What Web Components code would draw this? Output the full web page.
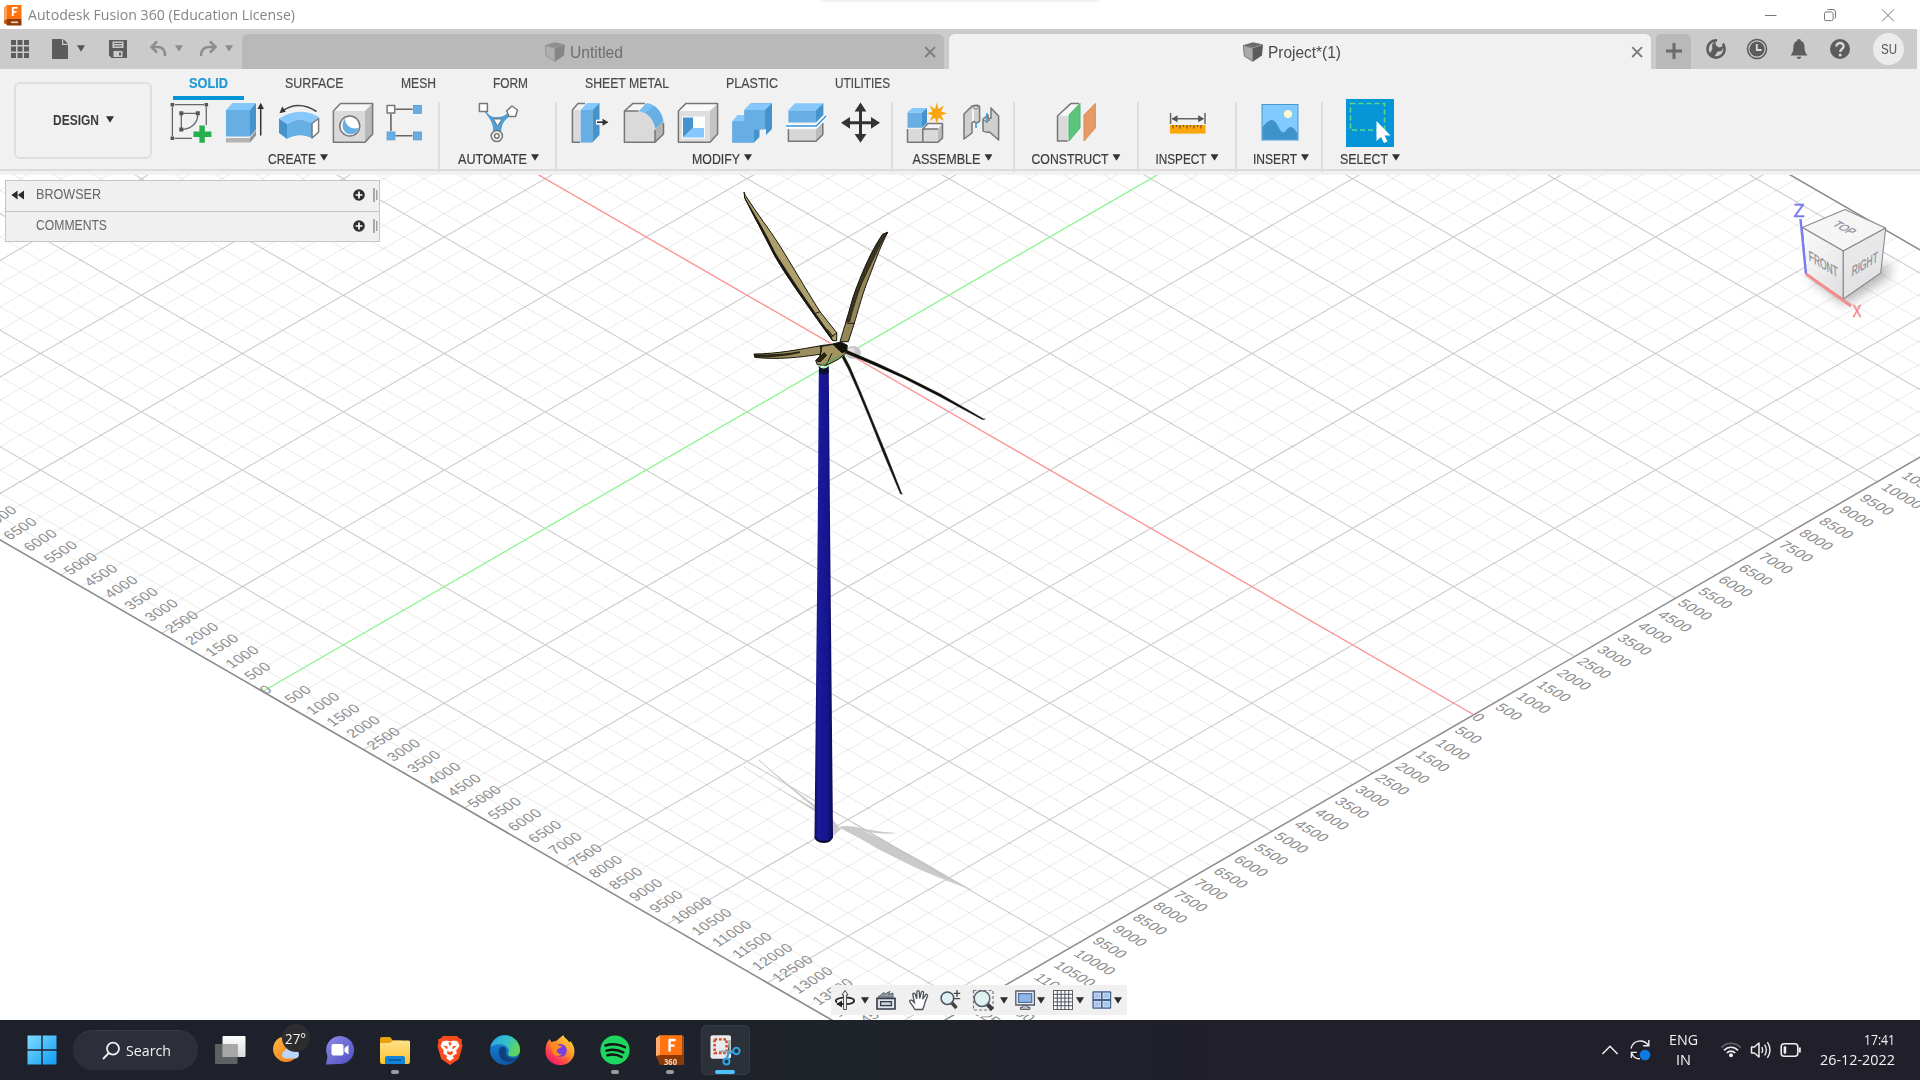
<!DOCTYPE html>
<html lang="en">
<head>
<meta charset="utf-8">
<title>Autodesk Fusion 360 (Education License)</title>
<style>
html,body{margin:0;padding:0;background:#fff;overflow:hidden}
body{width:1920px;height:1080px;font-family:"Liberation Sans",Arial,sans-serif}
</style>
</head>
<body>
<fusion-app></fusion-app>
<script>
const caret=(c='#333')=>`<svg class="caret" width="8" height="7" viewBox="0 0 8 7"><path d="M0 .3H8L4 6.8Z" fill="${c}"/></svg>`;

class Base extends HTMLElement{
  connectedCallback(){
    if(this.shadowRoot)return;
    const t=document.createElement('template');
    t.innerHTML=this.render();
    this.attachShadow({mode:'open'}).appendChild(t.content.cloneNode(true));
    if(this.ready)this.ready();
  }
}

/* Text squeezed or stretched horizontally to an exact width */
class FitText extends Base{
  render(){return `<style>:host{display:block;flex:none;white-space:nowrap;width:${this.getAttribute('w')}px}span{display:inline-block;transform-origin:0 50%;white-space:nowrap}</style><span><slot></slot></span>`}
  ready(){
    const s=this.shadowRoot.querySelector('span');
    const w=s.getBoundingClientRect().width;
    if(w)s.style.transform=`scaleX(${(+this.getAttribute('w')/w).toFixed(4)})`;
  }
}
customElements.define('fit-text',FitText);

const G='stroke="#777" stroke-width="1.5" stroke-linejoin="round"';
const B='#66aee4',BL='#86c8fb',BD='#4592cc';
const ICONS={
/* ---- ribbon, 44 x 44 ---- */
sketch:[44,44,`<g stroke="#666" stroke-width="1.3" fill="none"><path d="M3.4 6V35M6 3.7H35M37.3 6V24M6 37.3H23M12.3 14V27M14 12.3H27M28.7 14C28.7 22 22 28 14 28.3"/></g><g fill="#555"><path d="M1.6 1.9h3.6v3.6H1.6zM35.5 1.9h3.6v3.6h-3.6zM1.6 35.5h3.6v3.6H1.6zM10.3 10.3h4v4h-4zM26.8 10.3h4v4h-4zM10.3 26.5h4v4h-4z"/></g><path d="M30.4 24.6h5.4v6h6.6v5.4h-6.6v5.8h-5.4v-5.8h-6v-5.4h6z" fill="#25b04f"/>`],
extrude:[44,44,`<path d="M3 37H27L33 29V34L27 41.5H3Z" fill="#b5b5b5"/><path d="M27 37L33 30V34.5L27 41.5Z" fill="#949494"/><path d="M3 9H27V35.5H3Z" fill="${B}"/><path d="M3 9L9.5 2H33L27 9Z" fill="${BL}"/><path d="M27 9L33 2V28.5L27 35.5Z" fill="${BD}"/><path d="M37.7 6V34.5" stroke="#333" stroke-width="1.5"/><path d="M37.7 1.8L41 8H34.4Z" fill="#333"/>`],
revolve:[44,44,`<path d="M2 17.5L10 23V38L2 32Z" fill="${BD}"/><path d="M10 23Q22 15 35 22V37Q22 31 10 38Z" fill="${B}"/><path d="M2 17.5Q22 5 42 16L35 22.5Q22 15 10 23Z" fill="${BL}"/><path d="M35 22.5L41.6 17.5V31L35 37Z" fill="#fff" ${G}/><path d="M39.5 10.5Q22 -1 6 9.5" fill="none" stroke="#444" stroke-width="1.5"/><path d="M2.5 12.2L5.2 5.5L8.7 10.7Z" fill="#333"/>`],
hole:[44,44,`<path d="M2.4 10L9.5 2.4H41.6L34 10Z" fill="#f6f6f6"/><path d="M34 10L41.6 2.4V33L34 41.3Z" fill="#b9b9b9"/><path d="M2.4 10H34V41.3H2.4Z" fill="#dadada"/><path d="M2.4 10L9.5 2.4H41.6V33L34 41.3H2.4Z" fill="none" ${G}/><circle cx="18.8" cy="25" r="10" fill="#fff" ${G}/><path d="M14 17.5C10 22 11 31 17 33C22 34.5 27 31 27.5 27C20 29 14 24 14 17.5Z" fill="${B}"/>`],
pattern:[44,44,`<g transform="translate(-2.5 0)"><path d="M13 8.3H30M8.4 13V30M13 34.7H30" stroke="#666" stroke-width="1.6"/><rect x="4.6" y="4.5" width="7.6" height="7.6" fill="#fff" ${G}/><g fill="${B}" stroke="#5c9fd2" stroke-width="1"><rect x="31" y="4.5" width="7.8" height="7.8"/><rect x="4.6" y="31" width="7.8" height="7.8"/><rect x="31" y="31" width="7.8" height="7.8"/></g></g>`],
automate:[44,44,`<path d="M8 7C14 17 17 16 21 16C26 16 29 15 34 10L36 14C29 18 25 22 25 34H17C18 24 16 20 7 9Z" fill="#4f9fd8"/><path d="M17.5 18H26L21.5 25Z" fill="#fff" stroke="#777"/><rect x="3.4" y="2.4" width="8" height="8" fill="#fff" ${G}/><path d="M36 5L41.5 9L39.5 15.5H33L30.7 9.8Z" fill="#fff" ${G}/><circle cx="20.8" cy="35" r="5.6" fill="#eee" ${G}/><circle cx="20.8" cy="35" r="2.2" fill="#fff" ${G}/>`],
press:[44,44,`<path d="M4.4 9L10 2.4H17L12 9V41.3H4.4Z" fill="#f2f2f2"/><path d="M4.4 9H12V41.3H4.4Z" fill="#dadada"/><path d="M12 41.3H4.4V9L10 2.4H17" fill="none" ${G}/><path d="M12.6 9H24.4V41.6H12.6Z" fill="${B}"/><path d="M12.6 9L19 2H31.5L24.4 9Z" fill="${BL}"/><path d="M24.4 9L31.5 2V34L24.4 41.6Z" fill="${BD}"/><path d="M28 21.2H36" stroke="#fff" stroke-width="5"/><path d="M29 21.2H36" stroke="#333" stroke-width="1.7"/><path d="M34.5 17.7L40.5 21.2L34.5 24.7Z" fill="#333"/>`],
fillet:[44,44,`<path d="M2.4 10L11 2.4H24L17 10Z" fill="#f6f6f6"/><path d="M2.4 10H17C27 12 33 20 33 28V41.3H2.4Z" fill="#dadada"/><path d="M33 28L41.5 20V33L33 41.3Z" fill="#b5b5b5"/><path d="M17 10C27 12 31 18 33.5 27.8L41.5 20C40 10 33 3 24.5 2.2Z" fill="${B}"/><path d="M17 10L24.5 2.2C27 2.4 30 3.4 32 5L23 12Z" fill="${BL}" opacity=".6"/><path d="M16.5 10H2.4L11 2.4H23M2.4 10V41.3H33L41.5 33V22M33 41V29" fill="none" ${G}/>`],
shell:[44,44,`<path d="M2.4 10L10 2.4H41.6L34 10Z" fill="#fafafa"/><path d="M34 10L41.6 2.4V33L34 41.3Z" fill="#c4c4c4"/><path d="M2.4 10H34V41.3H2.4Z" fill="#dedede"/><path d="M2.4 10L10 2.4H41.6V33L34 41.3H2.4Z" fill="none" ${G}/><path d="M6 15.5H29V37.5H6Z" fill="#fff"/><path d="M7 16.5H17V27L7 36.5Z" fill="${BD}"/><path d="M7 36.5L17 27H28V36.5Z" fill="${BL}"/>`],
combine:[44,44,`<path d="M2.4 20.5L8 14H14.5V9L21 2.2H42V28L36 34V28H29.5V36L24 41.6H2.4Z" fill="${BD}"/><path d="M2.4 20.5H14.5V9H35V28.5H24V41.6H2.4Z" fill="${B}"/><path d="M2.4 20.5L8 14H14.5V20.5ZM14.5 9L21 2.2H42L35 9Z" fill="${BL}"/>`],
split:[44,44,`<path d="M4.4 9.3H32V21.5H4.4Z" fill="${B}"/><path d="M4.4 9.3L11 2.2H39.4L32 9.3Z" fill="${BL}"/><path d="M32 9.3L39.4 2.2V14L32 21.5Z" fill="${BD}"/><path d="M4.4 28.3H32V40.3H4.4Z" fill="#d6d6d6"/><path d="M32 28.3L38.8 21V33.5L32 40.3Z" fill="#bbb"/><path d="M4.4 28.3V40.3H32L38.8 33.5V22" fill="none" ${G}/><path d="M2 24.9H32.3L42 15" fill="none" stroke="#fff" stroke-width="4.5"/><path d="M2 24.9H32.3L42 15" fill="none" stroke="#2f97dd" stroke-width="1.5"/>`],
move:[44,44,`<path d="M22.5 8V36M8 21.8H37" stroke="#333" stroke-width="3"/><path d="M22.5 1.6L28.4 10.6H16.6ZM22.5 41.8L28.4 33H16.6ZM3 21.8L12 15.9V27.7ZM42 21.8L33 15.9V27.7Z" fill="#333"/>`],
assemble:[44,44,`<path d="M18 28L23 22.5H37.5L33 28Z" fill="#f5f5f5"/><path d="M2.5 28H33V41.3H2.5Z" fill="#dadada"/><path d="M33 28L37.5 22.5V37L33 41.3Z" fill="#bdbdbd"/><path d="M2.5 28V41.3H33L37.5 37V22.5H23L17.8 28V41.3M18 28H33" fill="none" ${G}/><path d="M2.5 11.5H17V26.8H2.5Z" fill="${B}"/><path d="M2.5 11.5L7 7H22L17 11.5Z" fill="${BL}"/><path d="M17 11.5L22 7V22L17 26.8Z" fill="${BD}"/><path d="M31.8 1.6L33.5 8L39 4.6L36 10.4L42.3 12.4L36 14.2L39.2 20L33.5 16.7L31.8 23L30 16.7L24.4 20L27.5 14.2L21.4 12.4L27.5 10.4L24.4 4.6L30 8Z" fill="#fba40c"/>`],
joint:[44,44,`<path d="M5 13L13 5Q20 3 20.6 6V20Q17 24 15 20L13 22V32L5 38Z" fill="#cfcfcf" ${G}/><path d="M13 8V20L15 20V8Z" fill="#f5f5f5"/><ellipse cx="16.8" cy="6.5" rx="2.5" ry="1.4" fill="#eee" stroke="#777"/><path d="M17 22V27" stroke="#2f97dd" stroke-width="1.5"/><path d="M39.6 15L32 7V17L29 18V14L24 18V30Q27 32 30.5 31L39.6 39Z" fill="#cfcfcf" ${G}/><path d="M28 12V22" stroke="#2f97dd" stroke-width="1.5"/><path d="M24 19Q27 22 31 19" fill="none" stroke="#777"/>`],
construct:[44,44,`<path d="M3.5 15L17 2.4H25L14 14V40H3.5Z" fill="#f7f7f7"/><path d="M3.5 15H13.8V40H3.5Z" fill="#dadada"/><path d="M13.8 40H3.5V15L17 2.4H25" fill="none" ${G}/><path d="M15 14L26 2.4V27L15 40Z" fill="#5bc57c" stroke="#4fb46e"/><path d="M30 14L41.3 2.4V27L30 40Z" fill="#e69a66" stroke="#d98a55"/>`],
inspect:[44,44,`<path d="M4.6 12V23M39 12V23M6 17.7H37" stroke="#666" stroke-width="1.5"/><path d="M5.5 17.7L11.5 14.2V21.2ZM38.2 17.7L32.2 14.2V21.2Z" fill="#555"/><rect x="4" y="24" width="35.5" height="8.6" fill="#fba60a"/><path d="M7 24V27.5M10.5 24V26M14 24V27.5M17.5 24V26M21 24V27.5M24.5 24V26M28 24V27.5M31.5 24V26M35 24V27.5" stroke="#775312" stroke-width="1.2"/>`],
insert:[44,44,`<rect x="4" y="3.5" width="36" height="35.5" fill="#80caff" stroke="#4a98d0"/><circle cx="30" cy="13" r="4" fill="#fffbd0"/><path d="M4.5 26C8 22 11 19 14 19C19 19 21 30 25 31.5C28 31.5 29 26 33 26C36 26 37 30 39.5 32V38.5H4.5Z" fill="#3f92ca"/>`],
select:[48,48,`<rect width="48" height="48" fill="#0696d7"/><rect x="4.5" y="4.5" width="34" height="26.5" fill="none" stroke="#5fd98a" stroke-width="1.5" stroke-dasharray="5 3"/><path d="M30.5 22V42L35 38L38 44L41.5 42.4L38.6 36.6H44.5Z" fill="#fff"/>`],
/* ---- quick access, 20 x 20 ---- */
apps:[20,20,`<path fill="#5c5c5c" d="M1 1h5v5H1zM7.5 1h5v5h-5zM14 1h5v5h-5zM1 7.5h5v5H1zM7.5 7.5h5v5h-5zM14 7.5h5v5h-5zM1 14h5v5H1zM7.5 14h5v5h-5zM14 14h5v5h-5z"/>`],
file:[20,20,`<path fill="#5c5c5c" d="M2 0H12V6H18V20H2ZM13.2 0L18 4.8H13.2Z"/>`],
save:[20,20,`<path fill="#5c5c5c" fill-rule="evenodd" d="M1 1H19V19H3.5L1 16.5ZM4.5 2.5V9H15.5V2.5ZM5.5 12V18H14.5V12ZM11 13.5H13V16.5H11ZM6 4H14V5H6ZM6 6.4H14V7.4H6Z"/>`],
undo:[20,20,`<path d="M2.5 8H9C14.5 8 16 12 16 17" fill="none" stroke="#8d8d8d" stroke-width="2.6"/><path d="M8 2.4L2.6 8L8 13.6" fill="none" stroke="#8d8d8d" stroke-width="2.6"/>`],
redo:[20,20,`<g transform="matrix(-1 0 0 1 20 0)"><path d="M2.5 8H9C14.5 8 17 12 17 17" fill="none" stroke="#8d8d8d" stroke-width="2.6"/><path d="M8 2.4L2.6 8L8 13.6" fill="none" stroke="#8d8d8d" stroke-width="2.6"/></g>`],
cube:[20,20,`<path d="M0 3.2L10 .3L20 2.6L10 5.8Z" fill="#6c6c6c"/><path d="M.2 3.4L10 6.2V19.4L1.4 14.2Z" fill="#a9a9a9" stroke="#666" stroke-width=".8"/><path d="M10 6L20 2.8L19 13.5L10 19.6Z" fill="#5b5b5b"/>`],
cubeg:[20,20,`<path d="M0 3.2L10 .3L20 2.6L10 5.8Z" fill="#8f8f8f"/><path d="M.2 3.4L10 6.2V19.4L1.4 14.2Z" fill="#b0b0b0" stroke="#8c8c8c" stroke-width=".8"/><path d="M10 6L20 2.8L19 13.5L10 19.6Z" fill="#868686"/>`],
close:[14,14,`<path d="M2.2 2.2L12 12M12 2.2L2.2 12" stroke="#7b7b7b" stroke-width="1.8"/>`],
plus:[18,18,`<path d="M9 1V17M1 9H17" stroke="#6b6b6b" stroke-width="3"/>`],
ext:[22,22,`<circle cx="11" cy="11" r="8.6" fill="#cbcbcb" stroke="#5c5c5c" stroke-width="2.6"/><path d="M4 17L7.4 11L7 7L10 3L11 7.5L14 9.5L19 8L16.5 13L12.6 13.5L8.4 20Z" fill="#5c5c5c"/><path d="M12.5 0L11.4 5.4L13 7.6L16.4 7.4L19 4L15 1Z" fill="#cbcbcb"/>`],
clock:[22,22,`<circle cx="11" cy="11" r="9.5" fill="#cbcbcb" stroke="#5c5c5c" stroke-width="1.6"/><circle cx="11" cy="11" r="7.6" fill="#5c5c5c"/><path d="M10.8 6V12H15.5" fill="none" stroke="#ddd" stroke-width="1.8"/>`],
bell:[22,22,`<path d="M11 1C12.2 1 13 2 13 3C16 4 16.6 7 16.6 10C16.6 13 17.5 15 19.5 17.5H2.5C4.5 15 5.4 13 5.4 10C5.4 7 6 4 9 3C9 2 9.8 1 11 1ZM8.7 18.8H13.3C13 20.6 12 21 11 21C10 21 9 20.6 8.7 18.8Z" fill="#5c5c5c"/>`],
help:[22,22,`<circle cx="11" cy="11" r="10" fill="#5c5c5c"/><path d="M7.4 8.4C7.4 3.8 14.8 4 14.6 8.4C14.5 11 11.2 11 11.2 14" fill="none" stroke="#d8d8d8" stroke-width="2.4"/><circle cx="11.2" cy="17" r="1.5" fill="#d8d8d8"/>`],
appicon:[20,22,`<path d="M1 4L4 1H18V21H4L1 19Z" fill="#c4500a"/><path d="M4 1H18.5V15H4Z" fill="#ff7210"/><path d="M1 4L4 1V15L1 17Z" fill="#f9a25e"/><path d="M4 15H18.5V21.5H4Z" fill="#8f3b0b"/><path d="M9 3.8H14.5M9.8 3.8V12M9.8 7.8H13.6" stroke="#fff" stroke-width="1.8"/><path d="M8 18.3H15" stroke="#f4d7c4" stroke-width="1.6"/>`],
rewind:[14,10,`<path d="M6.6 .6V9.4L.4 5ZM13 .6V9.4L6.8 5Z" fill="#2b2b2b"/>`],
addc:[12,12,`<circle cx="6" cy="6" r="5.8" fill="#2e2e2e"/><path d="M6 2.6V9.4M2.6 6H9.4" stroke="#fff" stroke-width="1.7"/>`],
bars:[5,14,`<path d="M1 0V14" stroke="#777" stroke-width="1.2"/><path d="M3.8 2V12" stroke="#888" stroke-width="1.1"/>`],
/* ---- navigation, 22 x 22 ---- */
orbit:[22,22,`<path d="M9.6 6L8 6L11 1.5L14 6H12.4V20.5H9.6Z" fill="#fff" stroke="#444" stroke-width="1"/><path d="M13 8.6C22 9 23 14 13 15.2M9 8.6C1 9.4 1 12 3 13.5" fill="none" stroke="#222" stroke-width="1.8"/><path d="M3 15H10" stroke="#222" stroke-width="1.6"/><path d="M8 11.4V18.4L2.4 15Z" fill="#222"/>`],
look:[22,22,`<path d="M2 9.4H20V20H2Z" fill="#dfe3ea" stroke="#333a48" stroke-width="1.6"/><path d="M5.6 12.6H16.4V16.6H5.6Z" fill="#c8ced8" stroke="#333a48" stroke-width="1.3"/><path d="M3 8L9 3.4V5.4L15 2.4L13.6 5.5L18 4V8.2Z" fill="#959ca8" stroke="#444b59" stroke-width=".8"/>`],
hand:[22,22,`<path d="M7 20.5C5 17 3 14.5 1.6 12.6C1.4 11 3.4 10.6 4.6 11.8L6.4 13.6L4.8 5.4C4.8 3.8 6.6 3.6 7.2 5.2L8.8 9.8L8.9 2.8C9.2 1.2 11 1.2 11.3 2.8L11.7 9.4L13.4 3.2C14 1.8 15.7 2.2 15.6 3.8L14.7 10.2L17.6 5.8C18.6 4.7 20 5.6 19.5 7L16.8 14C16.4 17 15.5 18 14.8 20.5Z" fill="#fdfdfd" stroke="#4b4f58" stroke-width="1.3"/>`],
zoompm:[22,22,`<path d="M12 13L17.5 19" stroke="#444" stroke-width="3.4"/><circle cx="8.4" cy="9.2" r="6.3" fill="#dff0f0" stroke="#4a5363" stroke-width="1.5"/><path d="M18 1V8M14.8 4.4H21.2M14.8 9.6H21.2" stroke="#444" stroke-width="1.3"/>`],
zoomw:[22,22,`<rect x="1.5" y="1.5" width="19.5" height="19.5" fill="none" stroke="#777" stroke-width="1.2" stroke-dasharray="3 2"/><path d="M15 15L20.5 20.5" stroke="#3c3c3c" stroke-width="4"/><circle cx="10" cy="9.6" r="7.8" fill="#dff2f0" stroke="#5b6472" stroke-width="1.5"/>`],
display:[22,22,`<path d="M1.8 2H20.4V16H1.8Z" fill="#eef0f3" stroke="#555b66" stroke-width="1.3"/><path d="M4.5 4.6H17.7V13.4H4.5Z" fill="#8fb6e4" stroke="#4b74aa" stroke-width="1.2"/><path d="M8.4 16.5H14V18.5H16V20.4H6.4V18.5H8.4Z" fill="#b9bdc5" stroke="#5b606a" stroke-width="1"/>`],
grid:[22,22,`<rect x="1.5" y="1.5" width="19" height="19" fill="#fff" stroke="#666"/><path d="M5.3 1V21M9.1 1V21M12.9 1V21M16.7 1V21M1 5.3H21M1 9.1H21M1 12.9H21M1 16.7H21" stroke="#4d5160" stroke-width="1"/>`],
views:[22,22,`<rect x="1.4" y="2.2" width="18.8" height="17.6" rx="1" fill="#41618e"/><g fill="#a9c7ee" stroke="#dfe9f7" stroke-width=".8"><rect x="3.2" y="4" width="6.4" height="5.6"/><rect x="12" y="4" width="6.4" height="5.6"/><rect x="3.2" y="12.4" width="6.4" height="5.6"/><rect x="12" y="12.4" width="6.4" height="5.6"/></g>`],
/* ---- window ---- */
min:[14,14,`<path d="M1 7.5H12.5" stroke="#777" stroke-width="1"/>`],
restore:[14,14,`<rect x="1.5" y="4" width="8.6" height="8.6" rx="1.5" fill="none" stroke="#777"/><path d="M4 2.2Q4.4 1.5 5.4 1.5H10Q12.5 1.5 12.5 4V9Q12.5 10 11.6 10.4" fill="none" stroke="#777"/>`],
wclose:[14,14,`<path d="M1 1.4L13 13.4M13 1.4L1 13.4" stroke="#777" stroke-width="1"/>`],
/* ---- taskbar, 32 x 32 ---- */
win:[32,32,`<defs><linearGradient id="w" x1="0" y1="0" x2="1" y2="1"><stop offset="0" stop-color="#7edcff"/><stop offset="1" stop-color="#0f9bf5"/></linearGradient></defs><path d="M1.5 1.5H15.3V15.3H1.5ZM16.7 1.5H30.5V15.3H16.7ZM1.5 16.7H15.3V30.5H1.5ZM16.7 16.7H30.5V30.5H16.7Z" fill="url(#w)"/>`],
search:[20,20,`<circle cx="12" cy="7.6" r="6" fill="none" stroke="#f2f2f2" stroke-width="1.8"/><path d="M7.8 12L2 18" stroke="#f2f2f2" stroke-width="1.8"/>`],
task:[32,32,`<defs><linearGradient id="t" x1="0" y1="0" x2="0" y2="1"><stop offset="0" stop-color="#fff"/><stop offset="1" stop-color="#d9d9d9"/></linearGradient></defs><rect x="8.5" y="2" width="23" height="21" rx="1" fill="url(#t)"/><rect x="1" y="10" width="22.5" height="20" rx="1" fill="#6b6b6b" opacity=".85"/><path d="M8.5 10H23.5V23H8.5Z" fill="#a7a7a7"/>`],
weather:[32,32,`<defs><linearGradient id="s" x1="0" y1="0" x2="1" y2="1"><stop offset="0" stop-color="#ffb545"/><stop offset="1" stop-color="#ef7a13"/></linearGradient></defs><path d="M12 3A13 13 0 1 0 28 22L20 12Z" fill="url(#s)"/><path d="M16 24.5A4 4 0 0 1 16 16.8A5.5 5.5 0 0 1 26 16A4.3 4.3 0 0 1 26.5 24.5Z" fill="#bcd6fb"/>`],
chat:[32,32,`<defs><linearGradient id="c" x1="0" y1="0" x2="1" y2="1"><stop offset="0" stop-color="#8f8ce8"/><stop offset="1" stop-color="#4c4cc0"/></linearGradient></defs><path d="M2 30.5L3.5 22A14 14 0 1 1 16 30Z" fill="url(#c)"/><rect x="7.5" y="10" width="12" height="11.5" rx="2" fill="#fff"/><path d="M20.5 14L24.5 11V20.5L20.5 17.8Z" fill="#fff"/>`],
folder:[32,32,`<path d="M1 5Q1 3 3 3H11L14 6.5H22V12H1Z" fill="#e6a30d"/><defs><linearGradient id="f" x1="0" y1="0" x2="0" y2="1"><stop offset="0" stop-color="#ffe28a"/><stop offset="1" stop-color="#fcc22e"/></linearGradient></defs><path d="M1 9H11L14 6.5H30Q31 6.5 31 8V28Q31 30 29 30H3Q1 30 1 28Z" fill="url(#f)"/><path d="M6 30V24Q6 22 8 22H24Q26 22 26 24V30Z" fill="#1283d6"/><path d="M10 26H22" stroke="#0b5699" stroke-width="1.6"/>`],
brave:[32,32,`<path d="M9 2H23L25.5 4.6L28 5.4L27.6 9L28.6 12L24.8 25L16 31L7.2 25L3.4 12L4.4 9L4 5.4L6.5 4.6Z" fill="#fb4a1c"/><path d="M8.5 7.4L12 6.6L16 7.6L20 6.6L23.5 7.4L25.6 12L22.2 16.4L22.8 19.4L18.6 22L20 24L16 27L12 24L13.4 22L9.2 19.4L9.8 16.4L6.4 12Z" fill="#fff"/><path d="M9 11.6L13.6 12.4L13.4 15.4ZM23 11.6L18.4 12.4L18.6 15.4ZM14.2 8.6L16 12.6L17.8 8.6ZM13.6 16.8L13 19.4L16 21.2L19 19.4L18.4 16.8L16 18.2Z" fill="#fb4a1c"/>`],
edge:[32,32,`<defs><linearGradient id="e1" x1="0" y1="0" x2="1" y2=".3"><stop offset="0" stop-color="#2aa5e4"/><stop offset=".6" stop-color="#35c1c8"/><stop offset="1" stop-color="#5fd65c"/></linearGradient><linearGradient id="e2" x1="0" y1="0" x2="0" y2="1"><stop offset="0" stop-color="#1b8de0"/><stop offset="1" stop-color="#0c59a4"/></linearGradient></defs><circle cx="16" cy="16" r="15" fill="url(#e2)"/><path d="M1.2 14A15 15 0 0 1 31 16C31 21 27 23 23 22.5C18.5 22 18.5 20 19.5 18.5C21 14 16 10 11 10.2C6 10.2 2 12 1.2 14Z" fill="url(#e1)"/><path d="M12 13C8 16 9 27 19 28C24 28.5 27 25.5 29 23.5C25 25.5 18.5 25 17 20C16 17 18 16 16 13.5C15 12.5 13 12.4 12 13Z" fill="#123f80"/>`],
firefox:[32,32,`<defs><linearGradient id="x" x1="1" y1="0" x2=".2" y2="1"><stop offset="0" stop-color="#ffe846"/><stop offset=".45" stop-color="#ff9a2a"/><stop offset=".8" stop-color="#ff3750"/><stop offset="1" stop-color="#e0187c"/></linearGradient></defs><path d="M3 9L5.4 5L7.4 8L12 7C14 6 15.6 3.6 19.4 1C20 4 24 5.6 25.4 8.4L26.4 7C29 10 30.8 14 30.4 18A14.4 13.4 0 0 1 1.6 17.5C1.4 14 2 11 3 9Z" fill="url(#x)"/><circle cx="16.4" cy="16.4" r="6.4" fill="#7a3fe0"/><path d="M6 10C9 8 13 9 14.5 11.5L18 12C18 14 14 14 13 16C12 18 15 20.5 18 20C14 24 8 21 8 16Z" fill="#ff8a1e"/>`],
spotify:[32,32,`<circle cx="16" cy="16" r="14.6" fill="#1ed760"/><path d="M6.5 11.5C13 9.5 21 10.2 26 13.3M7.5 16.6C13 15 19.5 15.7 24.3 18.4M8.5 21.3C13 20 18.5 20.6 22.6 23" fill="none" stroke="#141414" stroke-width="2.5" stroke-linecap="round"/>`],
fusion:[32,32,`<path d="M2 4L6 1V25L2 22Z" fill="#ffac6e"/><path d="M6 1.2H28.4V21H6Z" fill="#ff7310"/><path d="M28.4 1.2L30 3V30H28.4Z" fill="#b74608"/><path d="M2 22L6 21H29.8V31H6Z" fill="#8e3a08"/><path d="M14.6 6H21.6M15.6 6V17.4M15.6 11.6H20.6" stroke="#fff" stroke-width="2.4"/>`],
snip:[32,32,`<rect x="1.5" y="1.2" width="20.5" height="23.5" rx="2" fill="#e9eaec"/><rect x="5.6" y="5.4" width="12" height="13.6" fill="none" stroke="#d3431c" stroke-width="2.4" stroke-dasharray="2.6 1.8"/><path d="M20.5 6V17L17.5 24M10 17.6H24" stroke="#9aa0a6" stroke-width="2"/><circle cx="27.4" cy="17" r="3.2" fill="none" stroke="#2ea3e6" stroke-width="2"/><circle cx="17.4" cy="27.4" r="3" fill="none" stroke="#2ea3e6" stroke-width="2"/><path d="M20 19L25 18M18 24.5L20 18" stroke="#2ea3e6" stroke-width="2"/>`],
chev:[18,12,`<path d="M1.4 10L9 2.2L16.6 10" fill="none" stroke="#eee" stroke-width="1.5"/>`],
sync:[22,24,`<path d="M2 10.5C4 2 14 .5 19.4 7M19.8 2V7.8H14.2M2.4 20V14.4H7.8M2.6 15C4.5 19.5 8 21 11 20.6" fill="none" stroke="#eee" stroke-width="1.4"/><circle cx="16" cy="17" r="5.3" fill="#0b7be0"/>`],
wifi:[22,18,`<g fill="none" stroke-width="1.7"><path d="M1.3 6.6C6.5 1 15.5 1 20.7 6.6" stroke="#5c5b66"/><path d="M4 9.4C8 5.2 14 5.2 18 9.4M6.8 12C9.2 9.6 12.8 9.6 15.2 12" stroke="#eee"/></g><circle cx="11" cy="14.2" r="2" fill="#eee"/>`],
vol:[22,20,`<path d="M1.5 7H4.4L9 3V17L4.4 13H1.5Z" fill="none" stroke="#eee" stroke-width="1.5" stroke-linejoin="round"/><path d="M11.8 7Q13.4 10 11.8 13M14.6 4.6Q18 10 14.6 15.4M17.4 2.2Q22.6 10 17.4 17.8" fill="none" stroke="#eee" stroke-width="1.4"/>`],
batt:[22,16,`<rect x="1.2" y="1.8" width="16.6" height="12.4" rx="3" fill="none" stroke="#eee" stroke-width="1.6"/><rect x="3.6" y="4.2" width="2.6" height="7.6" rx="1" fill="#eee"/><path d="M19.8 5.5V10.5" stroke="#eee" stroke-width="2"/>`]
};
class UiIcon extends Base{
  render(){const [w,h,s]=ICONS[this.getAttribute('name')];
    return `<style>:host{display:block;flex:none;width:${w}px;height:${h}px}svg{display:block}</style><svg width="${w}" height="${h}" viewBox="0 0 ${w} ${h}">${s}</svg>`}
}
customElements.define('ui-icon',UiIcon);

class TitleBar extends Base{
  render(){return `<style>
  :host{display:flex;align-items:center;height:29px;background:#fff;padding:0 25px 0 3px;box-sizing:border-box;color:#858585;font:15px "Open Sans","Noto Sans",sans-serif;position:relative;overflow:hidden}
  fit-text{margin:0 0 2px 4.5px;line-height:26px}
  .sp{flex:1}.w{margin-left:44.5px}
  .pill{position:absolute;left:820px;top:-10px;width:280px;height:10px;border-radius:6px;box-shadow:0 0 4px rgba(0,0,0,.16)}
  </style><ui-icon name="appicon"></ui-icon><fit-text w="267">Autodesk Fusion 360 (Education License)</fit-text><div class="sp"></div>
  <ui-icon class="w" name="min"></ui-icon><ui-icon class="w" name="restore"></ui-icon><ui-icon class="w" name="wclose"></ui-icon><div class="pill"></div>`}
}
customElements.define('title-bar',TitleBar);

class DocTab extends Base{
  render(){const a=this.hasAttribute('active');return `<style>
  :host{display:flex;align-items:center;box-sizing:border-box;height:35px;margin-top:5px;border-radius:6px 6px 0 0;background:${a?'#f1f1f1':'#b9b9b9'};color:${a?'#4a4a4a':'#6e6e6e'};font-size:16px;padding:0 7px 0 0}
  .m{flex:1;display:flex;align-items:center;gap:5px;padding-left:${this.getAttribute('pad')}px}
  slot{display:block;padding-top:2px}</style>
  <div class="m"><ui-icon name="${a?'cube':'cubeg'}"></ui-icon><slot></slot></div><ui-icon name="close"></ui-icon>`}
}
customElements.define('doc-tab',DocTab);

class TabStrip extends Base{
  render(){return `<style>
  :host{display:flex;height:40px;background:#cbcbcb;border-right:3px solid #f4f4f4;box-sizing:border-box}
  .q{display:flex;align-items:center;width:242px;padding-left:10px;box-sizing:border-box}
  .q .caret{margin-top:-2px}
  .plus{width:35px;height:35px;margin:5px 0 0 5px;background:#b9b9b9;border-radius:5px 5px 0 0;display:flex;align-items:center;justify-content:center}
  .plus ui-icon{margin-top:-2px}
  .r{display:flex;align-items:center;gap:19.3px;margin-left:14px}
  .av{width:31px;height:32px;border-radius:50%;background:#ececec;color:#555;font-size:14px;display:flex;align-items:center;justify-content:center;margin-left:3px}
  doc-tab{width:702px}
  </style>
  <div class="q"><ui-icon name="apps"></ui-icon><ui-icon name="file" style="margin-left:20px"></ui-icon><span style="margin-left:7px;display:flex">${caret('#555')}</span><ui-icon name="save" style="margin-left:23px"></ui-icon><ui-icon name="undo" style="margin-left:21px"></ui-icon><span style="margin-left:6px;display:flex">${caret('#8d8d8d')}</span><ui-icon name="redo" style="margin-left:15px"></ui-icon><span style="margin-left:7px;display:flex">${caret('#8d8d8d')}</span></div>
  <doc-tab pad="303"><fit-text w="53">Untitled</fit-text></doc-tab>
  <doc-tab pad="293.5" active style="margin-left:5px"><fit-text w="73">Project*(1)</fit-text></doc-tab>
  <div class="plus"><ui-icon name="plus"></ui-icon></div>
  <div class="r"><ui-icon name="ext"></ui-icon><ui-icon name="clock"></ui-icon><ui-icon name="bell"></ui-icon><ui-icon name="help"></ui-icon><div class="av"><fit-text w="16">SU</fit-text></div></div>`}
}
customElements.define('tab-strip',TabStrip);

class ToolGroup extends Base{
  render(){const ic=this.getAttribute('icons').split(' ');return `<style>
  :host{display:flex;flex-direction:column;box-sizing:border-box;height:70px;border-right:2px solid #dedede;position:relative}
  :host([last]){border-color:transparent}
  .i{display:flex;justify-content:center;height:44px;align-items:center;margin-top:-1px;padding:0 ${this.getAttribute('pr')||0}px 0 ${this.getAttribute('pl')||0}px}
  .c{width:54px;flex:none;display:flex;justify-content:center}
  .l{display:flex;justify-content:center;align-items:center;gap:4px;font-size:14px;color:#3c3c3c;height:18px;margin-top:5.5px;-webkit-text-stroke:.2px #3c3c3c}
  .l .caret{margin-top:-4px}
  .l{transform:translateX(${this.getAttribute('dx')||0}px)}
  </style><div class="i">${ic.map(n=>`<div class="c"><ui-icon name="${n}"></ui-icon></div>`).join('')}</div><div class="l"><fit-text w="${this.getAttribute('lw')}">${this.getAttribute('label')}</fit-text>${caret()}</div>`}
}
customElements.define('tool-group',ToolGroup);

class RibbonBar extends Base{
  render(){
    const tabs=[['SOLID',39],['SURFACE',58.5],['MESH',35],['FORM',35],['SHEET METAL',84],['PLASTIC',52],['UTILITIES',55]];
    const gs=[['CREATE',48,'sketch extrude revolve hole pattern',275,-4,5],['AUTOMATE',69,'automate',117,1,0],['MODIFY',48,'press fillet shell combine split move',336,-2,-2],['ASSEMBLE',68,'assemble joint',122,-.5,-1],['CONSTRUCT',77,'construct',124,-.5,0],['INSPECT',51,'inspect',98,-.5,-1],['INSERT',44,'insert',86,2,-1],['SELECT',48,'select',94,1,-1]];
    return `<style>
    :host{display:flex;height:106px;background:#f1f1f1;box-sizing:border-box;border-bottom:4px solid #f1f1f1;position:relative;box-shadow:inset 0 -2px 0 #dcdcdc}
    .d{width:138px;height:77px;margin:12.5px 13px 0 14px;border:2px solid #dedede;border-radius:6px;box-sizing:border-box;display:flex;align-items:center;justify-content:center;gap:7px;font-size:14px;font-weight:bold;color:#3c3c3c}
    .d .caret{margin-top:-2px}
    .t{display:flex;gap:25px;padding-left:8px;height:31px;font-size:14px;color:#4a4a4a;-webkit-text-stroke:.2px}
    .t div{padding:0 16px;line-height:28px;box-sizing:border-box;height:31px}
    .t .on{color:#1f9ad6;font-weight:bold;border-bottom:4px solid #0696d7}
    .g{display:flex;padding-top:1.5px}
    </style><div class="d"><fit-text w="46">DESIGN</fit-text>${caret()}</div>
    <div><div class="t">${tabs.map(([t,w],i)=>`<div class="${i?'':'on'}"><fit-text w="${w}">${t}</fit-text></div>`).join('')}</div>
    <div class="g">${gs.map((g,i)=>`<tool-group label="${g[0]}" lw="${g[1]}" icons="${g[2]}" dx="${g[4]}" ${g[5]>0?'pr':'pl'}="${Math.abs(g[5])}" style="width:${g[3]}px"${i==7?' last':''}></tool-group>`).join('')}</div></div>`}
}
customElements.define('ribbon-bar',RibbonBar);

class PalettePanel extends Base{
  render(){return `<style>
  :host{display:flex;align-items:center;box-sizing:border-box;width:375px;height:31.5px;border:1.5px solid #c6c6c6;background:#f0f0f0;color:#666;font-size:14.5px;padding:0 1px 1px 5px;margin-bottom:-1px}
  slot{display:block;margin-top:-2px}
  .k{width:25px}.s{flex:1}ui-icon+ui-icon{margin-left:8px}</style>
  <div class="k">${this.hasAttribute('rewind')?'<ui-icon name="rewind"></ui-icon>':''}</div><slot></slot><div class="s"></div><ui-icon name="addc"></ui-icon><ui-icon name="bars"></ui-icon>`}
}
customElements.define('palette-panel',PalettePanel);

class NavBar extends Base{
  render(){
    const it=[['orbit',4],['c',6],['look',7],['hand',11.5],['zoompm',10.5],['zoomw',11.5],['c',7],['display',7],['c',2],['grid',8],['c',3],['views',8.5],['c',2]];
    return `<style>:host{display:flex;align-items:center;box-sizing:border-box;width:296px;height:30px;background:#f0f0f0}svg{display:block}</style>${it.map(([n,m])=>n=='c'?`<div style="margin-left:${m-1}px">${caret('#2c2c2c')}</div>`:`<ui-icon name="${n}" style="margin-left:${m-1}px"></ui-icon>`).join('')}`}
}
customElements.define('nav-bar',NavBar);

class ModelCanvas extends Base{
  render(){
    const OX=848,OY=353.5,UX=100.93,UY=58.27;
    const P=(a,b)=>[(OX+UX*(a+b)).toFixed(1),(OY+UY*(a-b)).toFixed(1)];
    const A0=-7,A1=6.2,B0=-5.8,B1=6.2;
    let minor='',major='';
    for(let i=-35;i<=31;i++){const a=i/5;const s=`M${P(a,B0)}L${P(a,B1)}`;if(i%5)minor+=s;else if(i)major+=s}
    for(let i=-29;i<=31;i++){const b=i/5;const s=`M${P(A0,b)}L${P(A1,b)}`;if(i%5)minor+=s;else if(i)major+=s}
    let labels='';
    const D={1:3.6,3:15.4,4:20.9,5:26.9};
    for(let i=-14;i<=29;i++){const n=String(Math.abs(i)*500);const [x,y]=P(i/5,B0).map(Number);const d=D[n.length]+(i?2.2:0);
      labels+=`<text transform="matrix(.85 -.52 .78 .64 ${(x+d*.866).toFixed(1)} ${(y-d*.5).toFixed(1)})" y="5">${n}</text>`}
    for(let i=-26;i<=21;i++){const n=String(Math.abs(i)*500);const [x,y]=P(A1,i/5).map(Number);const d=D[n.length]+2;
      labels+=`<text transform="matrix(.866 .5 -.84 .56 ${(x+d*.866).toFixed(1)} ${(y+d*.5).toFixed(1)})" y="5">${n}</text>`}
    const z=s=>s.replace(/(-?[\d.]+),(-?[\d.]+)/g,(m,x,y)=>`${(720+x/3).toFixed(1)},${(170+y/3).toFixed(1)}`);
    return `<style>:host{display:block}svg{display:block}text{font-family:"Liberation Sans",Arial,sans-serif}</style>
    <svg width="1920" height="845" viewBox="0 175 1920 845">
    <defs><linearGradient id="tw"><stop offset="0" stop-color="#0a0a5c"/><stop offset=".18" stop-color="#1a1a9c"/><stop offset=".7" stop-color="#15158f"/><stop offset="1" stop-color="#08084f"/></linearGradient>
    <filter id="bl" x="-50%" y="-50%" width="200%" height="200%"><feGaussianBlur stdDeviation="6"/></filter>
    <linearGradient id="fl" x1="0" y1="0" x2="1" y2="1"><stop offset="0" stop-color="#fafafa"/><stop offset="1" stop-color="#e2e2e4"/></linearGradient></defs>
    <rect y="175" width="1920" height="845" fill="#fff"/>
    <path d="${minor}" stroke="#000" stroke-opacity=".085" fill="none"/>
    <path d="${major}" stroke="#000" stroke-opacity=".2" fill="none" stroke-width="1.1"/>
    <path d="M${P(A0,B0)}L${P(A1,B0)}" stroke="#8a8a8a" stroke-width="1.6"/>
    <path d="M${P(A1,B0)}L${P(A1,B1)}" stroke="#8d8d8d" stroke-width="1.5"/>
    <path d="M${P(A0,B1)}L${P(A1,B1)}" stroke="#8a8a8a" stroke-width="1.5"/>
    <path d="M${P(0,B0)}L${P(0,B1)}" stroke="#8cf58c" stroke-width="1.3"/>
    <path d="M${P(A0,0)}L${P(A1,0)}" stroke="#fb8f8f" stroke-width="1.3"/>
    <g font-size="14.5" fill="#8e8e8e" text-anchor="middle" letter-spacing=".4">${labels}</g>
    <g fill="#cacaca"><path d="M744,766.5Q782,791 816,809V812Q780,790 744,767.2Z"/><path d="M759,759.5Q788,785 816,806V809Q788,787 758.6,760.2Z"/><path d="M832,837L841,829L832,819ZM838,827Q850,824 864,829Q880,832 898,833Q880,835 864,831L880,839L920,860L950,877.5L972,890Q930,875 905,862.5L880,850Q860,838 838,827Z"/></g>
    <path d="M853,823L948,878" stroke="#bbb" stroke-width=".8"/>
    <path d="M818.8,370L828.8,370L830,520L833,838Q824,845 814.5,838L817.8,520Z" fill="url(#tw)"/>
    <path d="M814.3,836Q814.5,842.5 824,843Q832.5,842.5 832.8,836Q831,840.5 824,841Q817,840.5 814.3,836Z" fill="#0a0a28"/>
    <ellipse cx="853" cy="352.5" rx="8" ry="6.5" fill="#c8c4c8"/><ellipse cx="851" cy="351" rx="4" ry="3" fill="#e4e0e4"/>
    <g stroke="#17150c" stroke-width="1" stroke-linejoin="round">
    <path d="${z('M72,66L74,84C100,135 130,190 158,246C180,290 250,390 338,512L350,512L350,488L300,425C250,345 215,285 180,228C150,180 110,130 76,76Z')}" fill="#aea06c"/>
    <path d="${z('M74,84C100,135 130,190 158,246C180,290 250,390 338,512L332,495C253,384 192,292 164,246C138,190 105,135 74,84Z')}" fill="#1b190f" stroke-width=".6"/>
    <path d="${z('M503,187C480,230 460,290 440,340C425,380 412,430 403,460L385,515L360,515L378,455C390,420 395,390 407,360C430,300 455,240 488,193Z')}" fill="#95875a"/>
    <path d="${z('M503,187C474,230 450,290 425,340C408,385 398,420 389,455L378,455C390,420 395,390 407,360C430,300 455,240 488,193Z')}" fill="#3a3423" stroke-width=".7"/>
    <path d="${z('M102,552C170,552 240,538 310,526L345,522L350,545L300,553C240,562 170,570 104,562Z')}" fill="#9c8e5e"/>
    <path d="${z('M102,552C160,556 200,550 240,544L240,549C190,560 140,564 104,562Z')}" fill="#2a2616" stroke="none"/>
    <path d="${z('M300,530L345,522L378,548L355,568L318,586L292,584L287,572L300,558L304,540Z')}" fill="#a3955f"/>
    <path d="${z('M288,572L312,548L320,556L300,576ZM318,586L336,550M300,558L305,530')}" fill="#2a2616"/>
    <path d="${z('M380,541L470,579L560,621L660,671L790,746L796,747L788,749L655,677L550,624L460,584L378,550Z')}" fill="#0d0d0a" stroke-width=".4"/>
    <path d="${z('M372,556L390,590L422,665L457,750L500,855L545,970L548,973L541,971L492,855L450,750L416,668L386,600L366,562Z')}" fill="#14130d" stroke-width=".4"/>
    <path d="${z('M338,522L362,516L382,526L380,543L366,548L350,534Z')}" fill="#12110a"/>
    <path d="${z('M287,430L300,425M380,460L404,460M322,478L340,500M334,500L352,488')}" fill="none"/>
    </g>
    <path d="M819,366Q823,371 828.8,366V373Q824,376 819,373Z" fill="#0d1030"/>
    <path d="M818,367L842,355" stroke="#3fae68" stroke-width=".9"/>
    <!-- view cube -->
    <path d="M1808,276L1844,305L1888,278L1892,264Z" fill="#555" opacity=".42" filter="url(#bl)"/>
    <g stroke="#8b8b8b" stroke-width="1.1" stroke-linejoin="round" fill-opacity=".93"><path d="M1802.3,227.5L1845,209.5L1885.7,228L1843.3,251Z" fill="#f4f4f5"/><path d="M1802.3,227.5L1843.3,251V299L1806,274Z" fill="url(#fl)"/><path d="M1885.7,228L1843.3,251V299L1880.7,273Z" fill="#e6e6e8"/></g>
    <path d="M1800.5,219L1806,274" stroke="#7a7af2" stroke-width="2.4"/><path d="M1806,274L1851,306" stroke="#f38d8d" stroke-width="3"/>
    <g text-anchor="middle" fill="#8a8e95" stroke="#8a8e95" stroke-width=".3" font-size="12">
    <text transform="matrix(.7 .42 .06 1.2 1823.5 269)">FRONT</text><text transform="matrix(.7 -.42 -.06 1.2 1864.5 269)">RIGHT</text><text transform="matrix(.72 .38 -.8 .48 1841 230)" font-size="13">TOP</text></g>
    <text x="1799" y="217" font-size="18" text-anchor="middle" fill="#7777ee" stroke="#7777ee" stroke-width=".4">Z</text><text x="1857" y="316.5" font-size="17" text-anchor="middle" fill="#f58484" stroke="#f58484" stroke-width=".4" textLength="9" lengthAdjust="spacingAndGlyphs">X</text>
    </svg>`}
}
customElements.define('model-canvas',ModelCanvas);

class ModelView extends Base{
  render(){return `<style>:host{display:block;height:845px;position:relative;overflow:hidden;background:#fff}
  .p{position:absolute;left:5px;top:5px}nav-bar{position:absolute;left:831px;top:810px}</style>
  <model-canvas></model-canvas><div class="p"><palette-panel rewind><fit-text w="65">BROWSER</fit-text></palette-panel><palette-panel><fit-text w="71">COMMENTS</fit-text></palette-panel></div><nav-bar></nav-bar>`}
}
customElements.define('model-view',ModelView);

class TaskItem extends Base{
  render(){const r=this.getAttribute('run'),n=this.getAttribute('icon');return `<style>
  :host{display:flex;flex:none;width:55px;height:60px;position:relative;align-items:center;justify-content:center}
  .b{width:49px;height:50px;display:flex;align-items:center;justify-content:center;border-radius:5px;box-sizing:border-box;${r=='on'?'background:#2c3038;border:1px solid #363a42':''}}
  .i{position:absolute;bottom:6px;left:50%;transform:translateX(-50%);height:4px;border-radius:2px;width:${r=='on'?20:8}px;background:${r=='on'?'#4cc2ff':'#9b9ca0'}}
  ::slotted(*){position:absolute}
  </style><div class="b"><ui-icon name="${n}"></ui-icon></div>${r?'<div class="i"></div>':''}<slot></slot>`}
}
customElements.define('task-item',TaskItem);

class TaskBar extends Base{
  render(){return `<style>
  :host{display:flex;align-items:center;height:60px;background:linear-gradient(90deg,#1e212c,#1e2229 45%,#201f2a 65%,#211f2a);color:#f2f2f2;font-family:"Open Sans","Noto Sans",sans-serif;font-size:15px;padding-right:25px;box-sizing:border-box}
  .s{width:125px;height:40px;border-radius:20px;background:#2c2f39;border-top:1px solid #383b44;box-sizing:border-box;display:flex;align-items:center;margin:0 5px 0 15px;padding-left:28px;gap:5px}
  .s fit-text{margin-top:-2px}
  .sp{flex:1}.t{display:flex;flex-direction:column;line-height:20.5px;align-items:center;padding-bottom:2px}
  .e{align-items:flex-end}
  .bd{left:24px;top:4px;width:28px;height:28px;border-radius:50%;background:#2d2d2f;display:flex;align-items:center;justify-content:center;font-size:14px}
  .n{left:21px;top:37px;font-size:8px;line-height:10px;font-weight:bold;color:#f2d8c6}
  </style><ui-icon name="win" style="margin-left:25.5px"></ui-icon>
  <div class="s"><ui-icon name="search"></ui-icon><fit-text w="45">Search</fit-text></div>
  <task-item icon="task"></task-item><task-item icon="weather"><div class="bd"><fit-text w="21">27°</fit-text></div></task-item><task-item icon="chat"></task-item><task-item icon="folder" run="y"></task-item><task-item icon="brave"></task-item><task-item icon="edge"></task-item><task-item icon="firefox"></task-item><task-item icon="spotify" run="y"></task-item><task-item icon="fusion" run="y"><fit-text class="n" w="13">360</fit-text></task-item><task-item icon="snip" run="on"></task-item>
  <div class="sp"></div>
  <ui-icon name="chev"></ui-icon><ui-icon name="sync" style="margin-left:10px"></ui-icon>
  <div class="t" style="margin:0 22px 0 18px"><fit-text w="29">ENG</fit-text><fit-text w="15">IN</fit-text></div>
  <ui-icon name="wifi"></ui-icon><ui-icon name="vol" style="margin-left:8px"></ui-icon><ui-icon name="batt" style="margin-left:8px"></ui-icon>
  <div class="t e" style="margin-left:18px"><fit-text w="31">17:41</fit-text><fit-text w="75">26-12-2022</fit-text></div>`}
}
customElements.define('task-bar',TaskBar);

class FusionApp extends Base{
  render(){return `<style>:host{display:flex;flex-direction:column;width:1920px;height:1080px;overflow:hidden}:host>*{flex:none}</style><title-bar></title-bar><tab-strip></tab-strip><ribbon-bar></ribbon-bar><model-view></model-view><task-bar></task-bar>`}
}
customElements.define('fusion-app',FusionApp);
</script>
</body>
</html>
